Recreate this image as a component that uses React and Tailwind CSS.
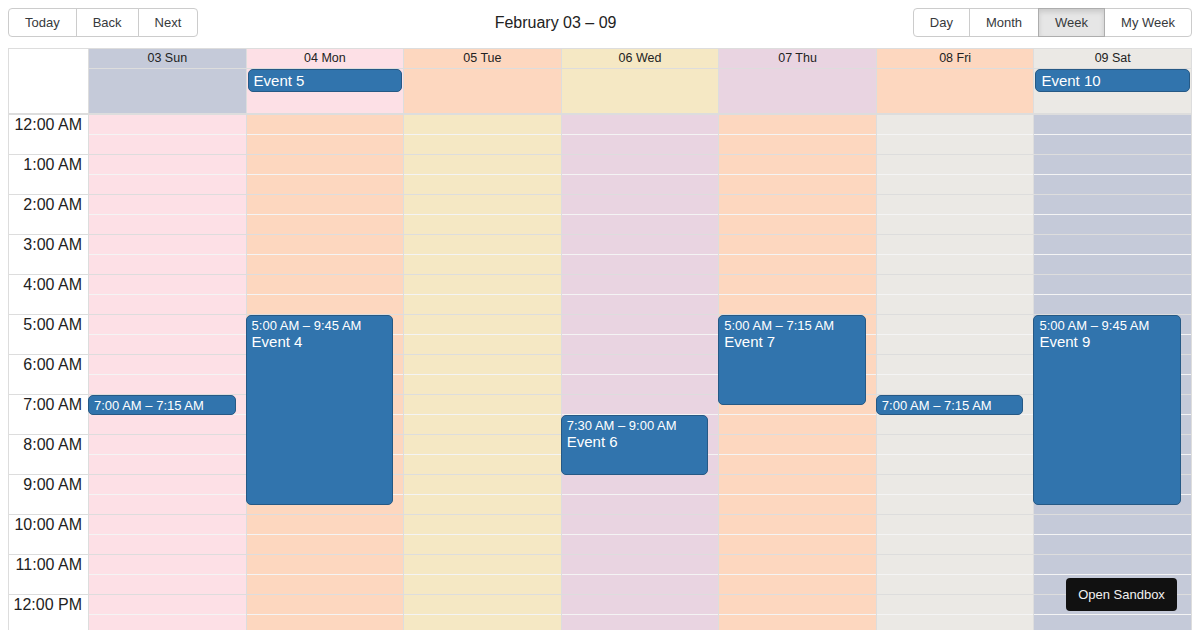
import React from 'react';

const C = {
  blue: 'bg-[#c5cad9]',
  pink: 'bg-[#fde0e6]',
  peach: 'bg-[#fdd7bf]',
  yellow: 'bg-[#f5e8c4]',
  lav: 'bg-[#e9d4e1]',
  gray: 'bg-[#ebe9e5]',
};

const days = [
  { label: '03 Sun', head: C.blue, body: C.pink },
  { label: '04 Mon', head: C.pink, body: C.peach, allDay: 'Event 5' },
  { label: '05 Tue', head: C.peach, body: C.yellow },
  { label: '06 Wed', head: C.yellow, body: C.lav },
  { label: '07 Thu', head: C.lav, body: C.peach },
  { label: '08 Fri', head: C.peach, body: C.gray },
  { label: '09 Sat', head: C.gray, body: C.blue, allDay: 'Event 10' },
];

// start / end in hours
const events = [
  { day: 0, start: 7, end: 7.25, time: '7:00 AM – 7:15 AM' },
  { day: 1, start: 5, end: 9.75, time: '5:00 AM – 9:45 AM', title: 'Event 4' },
  { day: 3, start: 7.5, end: 9, time: '7:30 AM – 9:00 AM', title: 'Event 6' },
  { day: 4, start: 5, end: 7.25, time: '5:00 AM – 7:15 AM', title: 'Event 7' },
  { day: 5, start: 7, end: 7.25, time: '7:00 AM – 7:15 AM' },
  { day: 6, start: 5, end: 9.75, time: '5:00 AM – 9:45 AM', title: 'Event 9' },
];

const hours = Array.from({ length: 24 }, (_, i) => {
  const h = i % 12 === 0 ? 12 : i % 12;
  return `${h}:00 ${i < 12 ? 'AM' : 'PM'}`;
});

function ButtonGroup({ items, active }) {
  return (
    <div className="flex">
      {items.map((item, i) => (
        <button
          key={item}
          className={
            'border px-4 py-[6px] text-[13px] leading-[15px] text-[#373a3c] ' +
            (i > 0 ? '-ml-px ' : '') +
            (i === 0 ? 'rounded-l-[4px] ' : '') +
            (i === items.length - 1 ? 'rounded-r-[4px] ' : '') +
            (item === active
              ? 'relative border-[#adadad] bg-[#e6e6e6] shadow-[inset_0_3px_5px_rgba(0,0,0,0.125)]'
              : 'border-[#ccc] bg-white')
          }
        >
          {item}
        </button>
      ))}
    </div>
  );
}

export default function App() {
  return (
    <div className="h-[630px] overflow-hidden bg-white p-2 font-['Liberation_Sans',Arial,sans-serif] text-[#222]">
      {/* Toolbar */}
      <div className="mb-[11px] flex items-center">
        <ButtonGroup items={['Today', 'Back', 'Next']} />
        <div className="flex-1 text-center text-base">February 03 – 09</div>
        <ButtonGroup items={['Day', 'Month', 'Week', 'My Week']} active="Week" />
      </div>

      <div className="border border-[#ddd]">
        {/* Header */}
        <div className="grid grid-cols-[79px_repeat(7,minmax(0,1fr))]">
          <div className="bg-white" />
          {days.map((d) => (
            <div key={d.label} className={'flex flex-col border-l border-[#ddd] ' + d.head}>
              <div className="h-5 border-b border-[#ddd] text-center text-[12.5px] leading-[19px]">{d.label}</div>
              <div className="h-[44px] pr-px pl-px">
                {d.allDay && (
                  <div className="rounded-[5px] border border-[#265985] bg-[#3174ad] px-[5px] py-[2px] text-[15px] leading-[17px] text-white">
                    {d.allDay}
                  </div>
                )}
              </div>
            </div>
          ))}
        </div>

        {/* Body */}
        <div className="grid grid-cols-[79px_repeat(7,minmax(0,1fr))] border-t-2 border-[#ddd]">
          <div className="bg-white">
            {hours.map((h) => (
              <div key={h} className="h-10 border-b border-[#ddd] pr-[6px] text-right text-base leading-5">
                {h}
              </div>
            ))}
          </div>
          {days.map((d, di) => (
            <div key={d.label} className={'relative border-l border-[#ddd] ' + d.body}>
              {hours.map((h) => (
                <div key={h} className="h-10 border-b border-[#ddd]">
                  <div className="h-5 border-b border-[#f4f4f4]" />
                </div>
              ))}
              {events
                .filter((e) => e.day === di)
                .map((e) => (
                  <div
                    key={e.time}
                    className="absolute left-[-1px] right-[10px] overflow-hidden rounded-[5px] border border-[#265985] bg-[#3174ad] px-[5px] pt-[2px] text-white"
                    style={{ top: e.start * 40, height: Math.max((e.end - e.start) * 40, 20) }}
                  >
                    <div className="text-[13px] leading-[15px]">{e.time}</div>
                    {e.title && <div className="text-[15px] leading-[17px]">{e.title}</div>}
                  </div>
                ))}
            </div>
          ))}
        </div>
      </div>

      <button className="fixed bottom-[19px] right-[23px] h-[33px] w-[111px] rounded-[4px] bg-[#111] text-[13px] text-[#f2f2f2]">
        Open Sandbox
      </button>
    </div>
  );
}
